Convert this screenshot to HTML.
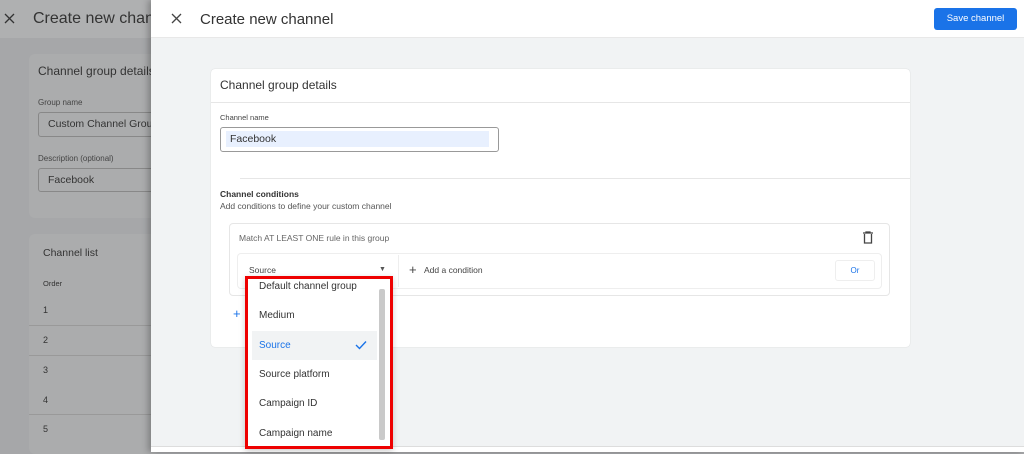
<!DOCTYPE html>
<html><head><style>
*{margin:0;padding:0;box-sizing:border-box}
body{width:1024px;height:452px;overflow:hidden;position:relative;font-family:"Liberation Sans",Arial,sans-serif;background:#a6a7a9}
.a{position:absolute}
.t{position:absolute;white-space:nowrap}
</style></head><body>
<div class="a" style="left:0;top:0;width:151px;height:38px;background:#afb0b1"></div>
<svg class="a" style="left:4px;top:13px" width="11" height="11" viewBox="0 0 11 11"><path d="M1 1l9 9M10 1l-9 9" stroke="#333" stroke-width="1.3"/></svg>
<div class="t" style="left:33px;top:10px;font-size:16px;color:#333">Create new channe</div>
<div class="a" style="left:29px;top:54px;width:130px;height:164px;background:#abacad;border-radius:6px"></div>
<div class="t" style="left:38px;top:64px;font-size:12px;color:#333">Channel group details</div>
<div class="t" style="left:38px;top:98px;font-size:8px;color:#444">Group name</div>
<div class="a" style="left:38px;top:112px;width:120px;height:25px;border:1px solid #888;border-radius:3px"></div>
<div class="t" style="left:48px;top:118px;font-size:10.5px;color:#333">Custom Channel Group</div>
<div class="t" style="left:38px;top:154px;font-size:8px;color:#444">Description (optional)</div>
<div class="a" style="left:38px;top:168px;width:120px;height:24px;border:1px solid #888;border-radius:3px"></div>
<div class="t" style="left:48px;top:174px;font-size:10.5px;color:#333">Facebook</div>
<div class="a" style="left:29px;top:234px;width:130px;height:220px;background:#abacad;border-radius:6px"></div>
<div class="t" style="left:43px;top:247px;font-size:10.5px;color:#333">Channel list</div>
<div class="t" style="left:43px;top:279px;font-size:7.5px;color:#333">Order</div>
<div class="t" style="left:43px;top:305px;font-size:9px;color:#333">1</div>
<div class="a" style="left:29px;top:325px;width:122px;height:1px;background:#999"></div>
<div class="t" style="left:43px;top:335px;font-size:9px;color:#333">2</div>
<div class="a" style="left:29px;top:355px;width:122px;height:1px;background:#999"></div>
<div class="t" style="left:43px;top:365px;font-size:9px;color:#333">3</div>
<div class="t" style="left:43px;top:395px;font-size:9px;color:#333">4</div>
<div class="a" style="left:29px;top:414px;width:122px;height:1px;background:#999"></div>
<div class="t" style="left:43px;top:424px;font-size:9px;color:#333">5</div>

<div class="a" style="left:151px;top:0;width:873px;height:452px;background:#f1f3f4;box-shadow:-3px 0 6px rgba(0,0,0,.25)"></div>
<div class="a" style="left:151px;top:0;width:873px;height:38px;background:#fff;border-bottom:1px solid #e8e8e8"></div>
<svg class="a" style="left:171px;top:13px" width="11" height="11" viewBox="0 0 11 11"><path d="M1 1l9 9M10 1l-9 9" stroke="#444" stroke-width="1.3"/></svg>
<div class="t" style="left:200px;top:11px;font-size:15px;color:#333">Create new channel</div>
<div class="a" style="left:934px;top:8px;width:83px;height:22px;background:#1a73e8;border-radius:3px;color:#fff;font-size:9.5px;text-align:center;line-height:22px">Save channel</div>
<div class="a" style="left:151px;top:446px;width:873px;height:6px;background:#fff;border-top:1px solid #ddd"></div>

<div class="a" style="left:211px;top:69px;width:699px;height:278px;background:#fff;border-radius:4px;box-shadow:0 0 1px rgba(0,0,0,.2)"></div>
<div class="a" style="left:211px;top:102px;width:699px;height:1px;background:#e6e6e6"></div>
<div class="t" style="left:220px;top:78px;font-size:12px;color:#333">Channel group details</div>
<div class="t" style="left:220px;top:113px;font-size:7.5px;color:#444">Channel name</div>
<div class="a" style="left:220px;top:127px;width:279px;height:25px;border:1px solid #999;border-radius:3px"></div>
<div class="a" style="left:226px;top:131px;width:263px;height:16px;background:#e8f0fe"></div>
<div class="t" style="left:230px;top:133px;font-size:10.5px;color:#333">Facebook</div>
<div class="a" style="left:240px;top:178px;width:670px;height:1px;background:#e6e6e6"></div>
<div class="t" style="left:220px;top:189px;font-size:8.5px;font-weight:bold;color:#333">Channel conditions</div>
<div class="t" style="left:220px;top:201px;font-size:8.5px;color:#555">Add conditions to define your custom channel</div>
<div class="a" style="left:229px;top:223px;width:661px;height:73px;border:1px solid #e6e6e6;border-radius:4px"></div>
<div class="t" style="left:239px;top:233px;font-size:8.5px;color:#666">Match AT LEAST ONE rule in this group</div>
<svg class="a" style="left:862px;top:231px" width="12" height="13" viewBox="0 0 12 13"><path d="M1 2h10M4 2V1h4v1M2.5 3v9h7V3" fill="none" stroke="#444" stroke-width="1.3"/></svg>
<div class="a" style="left:237px;top:253px;width:645px;height:36px;border:1px solid #eee;border-radius:4px"></div>
<div class="a" style="left:398px;top:255px;width:1px;height:32px;background:#eee"></div>
<div class="t" style="left:249px;top:265px;font-size:8.5px;color:#444">Source</div>
<div class="t" style="left:379px;top:266px;font-size:7px;color:#555">▼</div>
<div class="t" style="left:409px;top:262px;font-size:13px;color:#444">+</div>
<div class="t" style="left:424px;top:265px;font-size:8.5px;color:#444">Add a condition</div>
<div class="a" style="left:835px;top:260px;width:40px;height:21px;border:1px solid #eee;border-radius:3px;color:#1a73e8;font-size:8px;text-align:center;line-height:20px">Or</div>
<div class="t" style="left:233px;top:306px;font-size:13px;color:#1a73e8">+</div>

<div class="a" style="left:245px;top:276px;width:148px;height:173px;background:#fff;border:3px solid #e00;box-shadow:0 2px 6px rgba(0,0,0,.2)"></div>
<div class="a" style="left:252px;top:331px;width:125px;height:29px;background:#f1f3f4"></div>
<div class="a" style="left:379px;top:289px;width:6px;height:151px;background:#c9c9c9;border-radius:2px"></div>
<div class="t" style="left:259px;top:281px;font-size:10px;color:#333">Default channel group</div>
<div class="t" style="left:259px;top:310px;font-size:10px;color:#333">Medium</div>
<div class="t" style="left:259px;top:340px;font-size:10px;color:#1a73e8">Source</div>
<svg class="a" style="left:355px;top:340px" width="12" height="10" viewBox="0 0 12 10"><path d="M1 5l3.5 3.5L11 1.5" fill="none" stroke="#1a73e8" stroke-width="1.4"/></svg>
<div class="t" style="left:259px;top:369px;font-size:10px;color:#333">Source platform</div>
<div class="t" style="left:259px;top:398px;font-size:10px;color:#333">Campaign ID</div>
<div class="t" style="left:259px;top:428px;font-size:10px;color:#333">Campaign name</div>
</body></html>
